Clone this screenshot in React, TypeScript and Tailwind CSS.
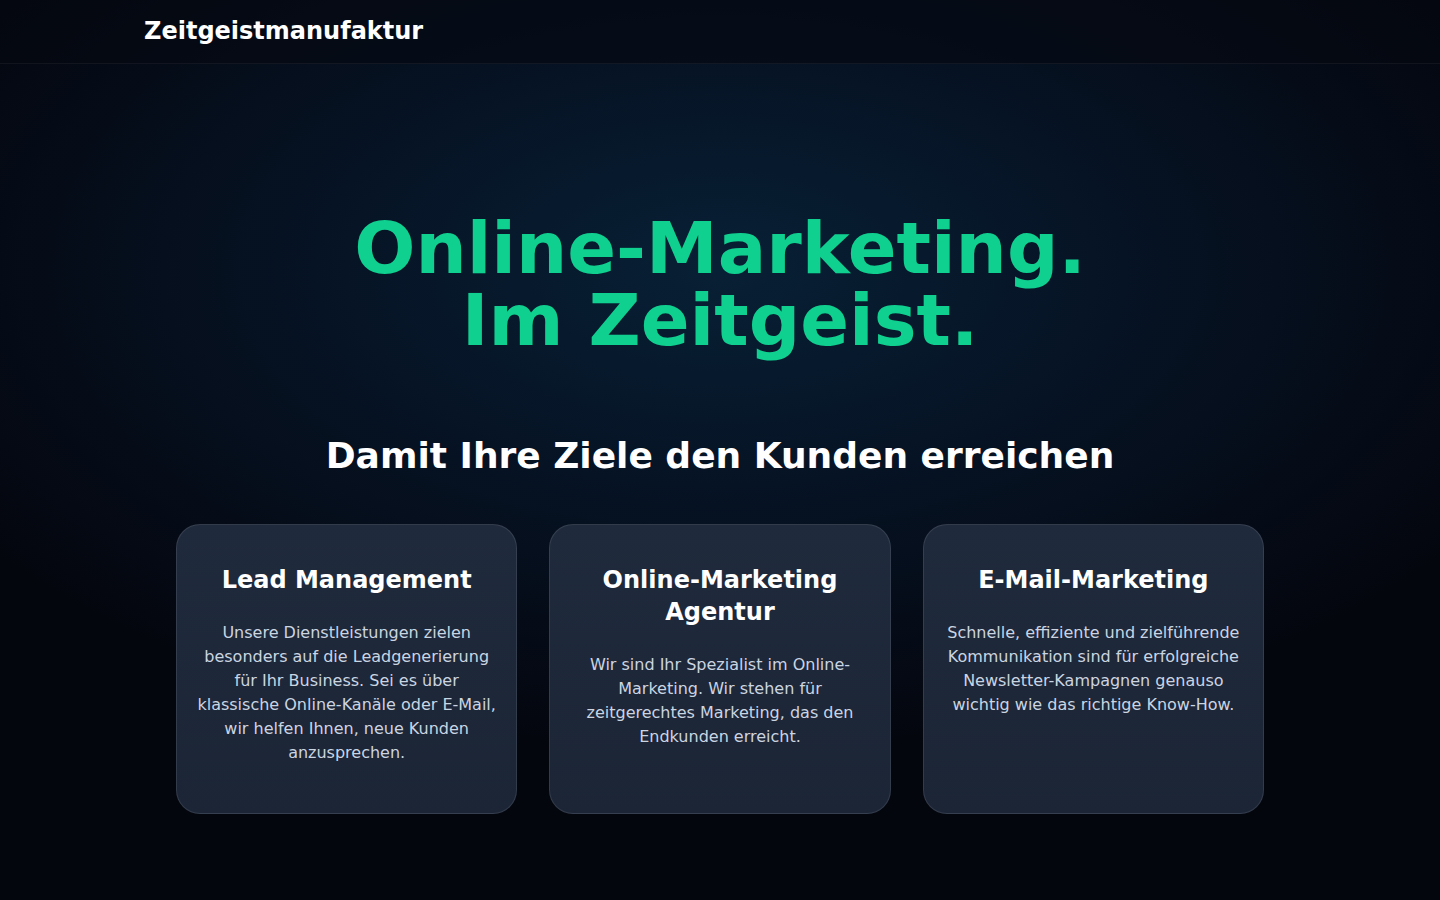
import React from "react";

const cards = [
  {
    title: "Lead Management",
    text: "Unsere Dienstleistungen zielen besonders auf die Leadgenerierung für Ihr Business. Sei es über klassische Online-Kanäle oder E-Mail, wir helfen Ihnen, neue Kunden anzusprechen.",
  },
  {
    title: "Online-Marketing Agentur",
    text: "Wir sind Ihr Spezialist im Online-Marketing. Wir stehen für zeitgerechtes Marketing, das den Endkunden erreicht.",
  },
  {
    title: "E-Mail-Marketing",
    text: "Schnelle, effiziente und zielführende Kommunikation sind für erfolgreiche Newsletter-Kampagnen genauso wichtig wie das richtige Know-How.",
  },
];

export default function App() {
  return (
    <div
      className="min-h-screen w-full bg-[#04060e] bg-[radial-gradient(ellipse_900px_480px_at_50%_30%,#082035_0%,#061324_45%,#04060e_100%)] text-white"
      style={{ fontFamily: '"DejaVu Sans", "Liberation Sans", sans-serif' }}
    >
      <header className="h-16 border-b border-white/5 bg-[#050810]/60">
        <div className="mx-auto flex h-full max-w-6xl items-center pb-0.5">
          <span className="text-2xl font-bold text-white">Zeitgeistmanufaktur</span>
        </div>
      </header>
      <main className="mx-auto max-w-6xl px-8 pb-20">
        <section className="pt-[148px] text-center">
          <h1 className="text-[72px] font-bold leading-[72px] text-[#10d08f]">
            Online-Marketing.
            <br />
            Im Zeitgeist.
          </h1>
          <h2 className="mt-[80px] text-[36px] font-bold leading-[40px] text-white">
            Damit Ihre Ziele den Kunden erreichen
          </h2>
        </section>
        <section className="mt-[48px] grid grid-cols-3 gap-8">
          {cards.map((c) => (
            <div
              key={c.title}
              className="rounded-3xl border border-white/10 bg-gradient-to-b from-[#1f2a3c] to-[#1b2536] px-5 pt-[39px] pb-[48px] text-center"
            >
              <h3 className="mx-auto max-w-[260px] text-2xl font-bold leading-8 text-white">{c.title}</h3>
              <p className="mt-[25px] text-base leading-6 text-[#cbd5e1]">{c.text}</p>
            </div>
          ))}
        </section>
      </main>
    </div>
  );
}
